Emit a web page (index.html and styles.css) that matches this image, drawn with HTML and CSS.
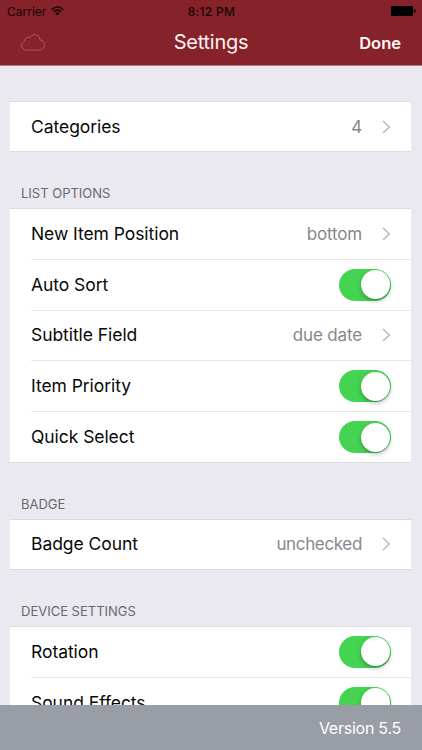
FILE: index.html
```html
<!DOCTYPE html>
<html lang="en">
<head>
<meta charset="utf-8">
<title>Settings</title>
<link rel="stylesheet" href="styles.css">
</head>
<body>
<div class="app">
  <header class="header">
    <div class="status">
      <div class="carrier">
        <span>Carrier</span>
        <svg class="wifi" viewBox="0 0 13 10" aria-hidden="true"><g fill="none" stroke="currentColor" stroke-width="1.6"><path d="M.8 3.7Q6.5-1.7 12.2 3.7M2.9 5.9Q6.5 2.5 10.1 5.9"/></g><path d="M4.3 7.3Q6.5 5.3 8.7 7.3L6.5 9.6Z" fill="currentColor"/></svg>
      </div>
      <span class="time">8:12 PM</span>
      <svg class="battery" viewBox="0 0 25 10" aria-hidden="true"><rect width="22" height="10" rx="1" fill="currentColor"/><path d="M23 3.2Q24.7 3.4 24.7 5T23 6.8Z" fill="currentColor"/></svg>
    </div>
    <div class="navbar">
      <svg class="cloud" viewBox="0 0 24 17" aria-hidden="true"><path d="M5.4 16.1C2.6 16.1.6 14 .6 11.5C.6 9.2 2 7.4 3.9 6.8C3.7 4.6 5.3 3.1 7.1 3.1C7.9 3.1 8.5 3.3 9 3.7C9.9 1.8 11.6.6 13.7.6C16.8.6 19 2.9 19 5.9C21.7 6.2 23.4 8.3 23.4 10.8C23.4 13.8 21.2 16.1 18.3 16.1Z" fill="none" stroke="currentColor"/></svg>
      <h1 class="title">Settings</h1>
      <span class="done">Done</span>
    </div>
  </header>

  <main class="content">
    <section class="card">
      <div class="row"><span class="label">Categories</span><span class="value">4</span><svg class="chevron" viewBox="0 0 9 14"><path d="M1 1L7.3 7L1 13"/></svg></div>
    </section>

    <h2 class="heading">LIST OPTIONS</h2>
    <section class="card">
      <div class="row"><span class="label">New Item Position</span><span class="value">bottom</span><svg class="chevron" viewBox="0 0 9 14"><path d="M1 1L7.3 7L1 13"/></svg></div>
      <div class="row"><span class="label">Auto Sort</span><span class="toggle"></span></div>
      <div class="row"><span class="label">Subtitle Field</span><span class="value">due date</span><svg class="chevron" viewBox="0 0 9 14"><path d="M1 1L7.3 7L1 13"/></svg></div>
      <div class="row"><span class="label">Item Priority</span><span class="toggle"></span></div>
      <div class="row"><span class="label">Quick Select</span><span class="toggle"></span></div>
    </section>

    <h2 class="heading">BADGE</h2>
    <section class="card">
      <div class="row"><span class="label">Badge Count</span><span class="value wide">unchecked</span><svg class="chevron" viewBox="0 0 9 14"><path d="M1 1L7.3 7L1 13"/></svg></div>
    </section>

    <h2 class="heading">DEVICE SETTINGS</h2>
    <section class="card">
      <div class="row"><span class="label">Rotation</span><span class="toggle"></span></div>
      <div class="row"><span class="label">Sound Effects</span><span class="toggle"></span></div>
    </section>
  </main>

  <footer class="footer">Version 5.5</footer>
</div>
</body>
</html>
```
FILE: styles.css
```css
* { box-sizing: border-box; }

body {
  margin: 0;
  font-family: Inter, "Liberation Sans", sans-serif;
  color: #080808;
}

.app {
  display: flex;
  flex-direction: column;
  height: 750px;
  overflow: hidden;
  background: #eae9f0;
}

.header {
  flex: none;
  height: 66px;
  border-bottom: 1px solid #b37d85;
  background: #862229;
}

.status {
  display: grid;
  grid-template-columns: 1fr auto 1fr;
  align-items: center;
  height: 22px;
  padding: 0 6px 0 7px;
  color: #160507;
  font-size: 12px;
}

.carrier {
  display: flex;
  align-items: center;
  gap: 5px;
}

.wifi { width: 13px; height: 10px; }

.time {
  font-weight: 500;
  letter-spacing: 0.3px;
}

.battery {
  justify-self: end;
  width: 25px;
  height: 10px;
  color: #000;
}

.navbar {
  display: grid;
  grid-template-columns: 1fr auto 1fr;
  align-items: center;
  height: 43px;
  padding: 0 21px;
  color: #fff4f3;
}

.cloud {
  width: 24px;
  height: 17px;
  margin-top: -3px;
  color: #ae5c61;
}

.title {
  margin: -3px 0 0;
  font-size: 20px;
  font-weight: 400;
  letter-spacing: -0.25px;
  line-height: 24px;
}

.done {
  justify-self: end;
  margin-top: -2px;
  font-size: 16.5px;
  font-weight: 600;
}

.content {
  flex: 1;
  min-height: 0;
  overflow: hidden;
  padding: 35px 11px 0 10px;
}

.card {
  border: solid #dcdbe1;
  border-width: 1px 0;
  background: #fff;
}

.row {
  display: flex;
  align-items: center;
  height: 49px;
  margin-left: 21px;
  padding-right: 20px;
}

.row:not(:last-child) { height: 49.8px; }

.row + .row,
.row + .row:not(:last-child) {
  height: 50.8px;
  border-top: 1px solid #e8e8eb;
}

.label {
  flex: 1;
  margin-top: -1px;
  font-size: 17.5px;
  letter-spacing: -0.06px;
}

.value {
  color: #87878b;
  font-size: 17px;
  letter-spacing: -0.15px;
}

.wide { letter-spacing: -0.35px; }

.chevron {
  width: 9px;
  height: 14px;
  margin-left: 20px;
  fill: none;
  stroke: #bdbdc3;
  stroke-width: 1.7;
}

.toggle {
  display: flex;
  justify-content: flex-end;
  width: 52px;
  height: 32px;
  padding: 1.5px;
  border-radius: 16px;
  background: #44d451;
}

.toggle::before {
  content: "";
  width: 29px;
  height: 29px;
  border-radius: 50%;
  background: #fff;
  box-shadow: 0 2px 5px #0004, 0 1px 1px #0002;
}

.heading {
  display: flex;
  align-items: flex-end;
  height: 56px;
  margin: 0;
  padding: 0 11px 7px;
  color: #69696e;
  font-size: 13px;
  font-weight: 400;
  line-height: 16px;
}

.footer {
  flex: none;
  height: 45px;
  padding-right: 21px;
  background: #999da5;
  color: #fff;
  font-size: 16px;
  letter-spacing: -0.25px;
  line-height: 46px;
  text-align: right;
}
```
